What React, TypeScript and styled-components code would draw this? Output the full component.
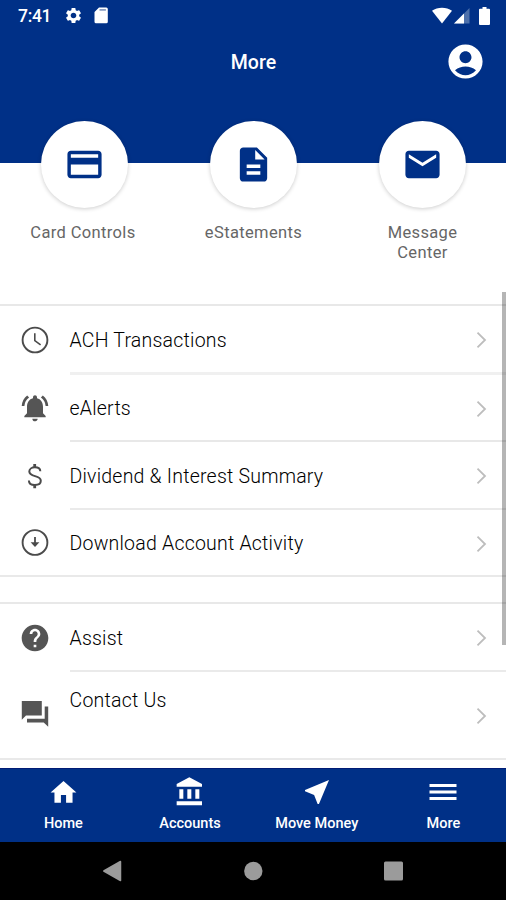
import React from "react";
import styled, { createGlobalStyle } from "styled-components";
import {
  MdAccountCircle,
  MdCreditCard,
  MdDescription,
  MdEmail,
  MdHelp,
  MdHome,
  MdNearMe,
  MdNotificationsActive,
  MdSettings,
} from "react-icons/md";

const navy = "#003087";

const GlobalStyle = createGlobalStyle`
  * { box-sizing: border-box; }
  body {
    margin: 0;
    background: #fff;
    font-family: Roboto, "Liberation Sans", sans-serif;
  }
  svg { display: block; flex: none; }
`;

const Screen = styled.div`
  position: relative;
  display: flex;
  flex-direction: column;
  width: 506px;
  height: 900px;
  overflow: hidden;
  background: #fff;
`;

const Header = styled.header`
  flex: none;
  height: 163px;
  background: ${navy};
  color: #fff;
`;

const StatusBar = styled.div`
  display: flex;
  align-items: center;
  height: 31px;
  padding: 0 16px 0 18px;
`;

const Clock = styled.span`
  width: 46px;
  font-size: 17.5px;
  font-weight: 500;
  letter-spacing: -0.3px;
`;

const StatusIcons = styled.div<{ $end?: boolean }>`
  display: flex;
  align-items: center;
  gap: ${(p) => (p.$end ? "2px" : "10.5px")};
  margin-left: ${(p) => (p.$end ? "auto" : "0")};
`;

const BatterySlot = styled.div`
  margin-left: 7px;
`;

const TitleBar = styled.div`
  display: grid;
  grid-template-columns: 1fr auto 1fr;
  align-items: center;
  height: 60px;
  padding: 0 20px;
`;

const Title = styled.h1`
  grid-column: 2;
  margin: 2px 0 0 1px;
  font-size: 19.5px;
  font-weight: 500;
  letter-spacing: 0.1px;
`;

const Profile = styled.div`
  justify-self: end;
`;

const QuickActions = styled.section`
  flex: none;
  display: grid;
  grid-template-columns: repeat(3, 169px);
  height: 183px;
  margin-top: -42px;
`;

const QuickAction = styled.div`
  display: flex;
  flex-direction: column;
  align-items: center;
`;

const Disc = styled.div`
  display: flex;
  align-items: center;
  justify-content: center;
  width: 87px;
  height: 87px;
  border-radius: 50%;
  background: #fff;
  color: ${navy};
  box-shadow: 0 1px 4px rgba(0, 0, 0, 0.2);
`;

const QuickLabel = styled.span<{ $shift?: number }>`
  max-width: 110px;
  margin-top: 15px;
  margin-left: ${(p) => p.$shift ?? 0}px;
  color: #666;
  font-size: 16.5px;
  line-height: 20px;
  letter-spacing: 0.36px;
  text-align: center;
`;

const Group = styled.ul<{ $gap?: boolean }>`
  flex: none;
  margin: ${(p) => (p.$gap ? "25px" : "0")} 0 0;
  padding: 0;
  list-style: none;
  border-top: 2px solid #e8e8e8;
  border-bottom: 2px solid #e9e9e9;
`;

const Row = styled.li<{ $height: number }>`
  display: flex;
  align-items: center;
  height: ${(p) => p.$height}px;
  padding-left: 21px;
  color: #555;
`;

const IconSlot = styled.div`
  display: flex;
  align-items: center;
  justify-content: center;
  width: 28px;
  height: 28px;
  margin-bottom: 1px;
`;

const RowBody = styled.div<{ $line?: string }>`
  display: flex;
  align-items: center;
  flex: 1;
  height: 100%;
  margin-left: 20.5px;
  padding: 2px 19px 0 0;
  border-bottom: ${(p) => p.$line ?? "none"};
`;

const RowLabel = styled.span<{ $raised?: boolean }>`
  flex: 1;
  margin-bottom: ${(p) => (p.$raised ? "31px" : "0")};
  color: #000;
  font-size: 19.5px;
  font-weight: 300;
  letter-spacing: 0.22px;
  white-space: nowrap;
`;

const ScrollThumb = styled.div`
  position: absolute;
  top: 292px;
  right: 0;
  width: 4px;
  height: 353px;
  background: rgba(0, 0, 0, 0.29);
`;

const TabBar = styled.nav`
  display: grid;
  grid-template-columns: repeat(4, 126.7px);
  flex: none;
  height: 74px;
  margin-top: auto;
  background: ${navy};
  border-top: 1px solid #001b75;
  color: #fff;
`;

const Tab = styled.div`
  display: flex;
  flex-direction: column;
  align-items: center;
  padding-top: 7px;
`;

const TabIcon = styled.div`
  display: flex;
  align-items: center;
  height: 32px;
`;

const TabLabel = styled.span`
  margin-top: 7px;
  font-size: 14.5px;
  font-weight: 500;
  line-height: 18px;
`;

const SystemBar = styled.div`
  display: flex;
  flex: none;
  align-items: center;
  justify-content: space-between;
  height: 58px;
  padding: 0 102px;
  background: #000;
`;

const SdCardIcon = () => (
  <svg width="14" height="17" viewBox="0 0 14 17">
    <path d="M5 .5h7.3A1.5 1.5 0 0 1 13.8 2v12.7a1.5 1.5 0 0 1-1.5 1.5H2A1.5 1.5 0 0 1 .5 14.700V5z" fill="#fff" />
    <path d="M5.500 2.900h6.400" stroke="#7d93bb" strokeWidth="1.600" />
  </svg>
);

const WifiIcon = () => (
  <svg width="20" height="17" viewBox="0 0 20 17">
    <path d="M0 3.800C5.600-.4 14.400-.4 20 3.800L10 16.500z" fill="#fff" />
  </svg>
);

const SignalIcon = () => (
  <svg width="16" height="17" viewBox="0 0 16 17">
    <path d="M0 16.500 15.500 1v15.500z" fill="#4d70ab" />
    <path d="M0 16.500 10 6.500v10z" fill="#fff" />
  </svg>
);

const BatteryIcon = () => (
  <svg width="11" height="18" viewBox="0 0 11 18">
    <path d="M3.500 0h4v1.800H10q1 0 1 1V17q0 1-1 1H1q-1 0-1-1V2.800q0-1 1-1h2.500z" fill="#fff" />
  </svg>
);

const ClockIcon = () => (
  <svg width="28" height="28" viewBox="0 0 28 28" fill="none" stroke="#4b4b4b">
    <circle cx="14" cy="14" r="12.400" strokeWidth="1.900" />
    <path d="M13.800 7.200v7.400l5.800 4.200" strokeWidth="1.600" />
  </svg>
);

const DollarIcon = () => (
  <svg width="28" height="28" viewBox="0 0 28 28" fill="none" stroke="#4b4b4b">
    <path d="M19.300 9.300C19.300 6.700 17 5.300 13.900 5.300S8.300 7 8.300 9.500c0 6 11.500 3.200 11.500 9.200 0 2.600-2.400 4.200-5.900 4.200s-6-1.600-6-4.500" strokeWidth="2" />
    <path d="M13.700 2v3.500M13.700 22.700v3.600" strokeWidth="2.800" />
  </svg>
);

const DownloadIcon = () => (
  <svg width="28" height="28" viewBox="0 0 28 28" fill="none" stroke="#4b4b4b">
    <circle cx="14" cy="14.500" r="12.400" strokeWidth="1.900" />
    <path d="M14 9v8" strokeWidth="1.800" />
    <path d="M9.600 14.200h8.800L14 19z" fill="#4b4b4b" stroke="none" />
  </svg>
);

const ChatIcon = () => (
  <svg width="28" height="28" viewBox="0 0 28 28" fill="#555">
    <path d="M.8 0h20v14.500H5L.8 18.700z" />
    <path d="M23.700 5.500h3.500v20.300L22.700 21.500H6V17.700h17.700z" />
  </svg>
);

const BankIcon = () => (
  <svg width="32" height="32" viewBox="0 0 24 24" fill="currentColor">
    <path d="M4 10v7h3v-7zM10 10v7h3v-7zM2 22h19v-3H2zM16 10v7h3v-7zM11.500 1 2 6v2h19V6z" />
  </svg>
);

const MenuIcon = () => (
  <svg width="32" height="32" viewBox="0 0 32 32" fill="currentColor">
    <path d="M2.500 8h27v3h-27zM2.500 14.500h27v3h-27zM2.500 21h27v3h-27z" />
  </svg>
);

const Chevron = () => (
  <svg width="11" height="18" viewBox="0 0 11 18" fill="none">
    <path d="M1.500 1.700 9 9l-7.500 7.300" stroke="#bdbdbd" strokeWidth="1.800" />
  </svg>
);

const BackIcon = () => (
  <svg width="20" height="22" viewBox="0 0 20 22">
    <path d="M18.500 1.500v19L1.800 11z" fill="#9b9b9b" stroke="#9b9b9b" strokeWidth="1.500" strokeLinejoin="round" />
  </svg>
);

const HomeDot = () => (
  <svg width="20" height="20" viewBox="0 0 20 20">
    <circle cx="10.300" cy="10" r="9.200" fill="#9b9b9b" />
  </svg>
);

const RecentsIcon = () => (
  <svg width="20" height="20" viewBox="0 0 20 20">
    <rect x="0" y=".5" width="19" height="19" rx="1.500" fill="#9b9b9b" />
  </svg>
);

interface ItemProps {
  icon: React.ReactNode;
  label: string;
  height?: number;
  line?: string;
  raised?: boolean;
}

const Item = ({ icon, label, height = 68, line, raised }: ItemProps) => (
  <Row $height={height}>
    <IconSlot>{icon}</IconSlot>
    <RowBody $line={line}>
      <RowLabel $raised={raised}>{label}</RowLabel>
      <Chevron />
    </RowBody>
  </Row>
);

const NavTab = ({ icon, label }: { icon: React.ReactNode; label: string }) => (
  <Tab>
    <TabIcon>{icon}</TabIcon>
    <TabLabel>{label}</TabLabel>
  </Tab>
);

export default function App() {
  return (
    <Screen>
      <GlobalStyle />
      <Header>
        <StatusBar>
          <Clock>7:41</Clock>
          <StatusIcons>
            <MdSettings size={19} />
            <SdCardIcon />
          </StatusIcons>
          <StatusIcons $end>
            <WifiIcon />
            <SignalIcon />
            <BatterySlot><BatteryIcon /></BatterySlot>
          </StatusIcons>
        </StatusBar>
        <TitleBar>
          <Title>More</Title>
          <Profile>
            <MdAccountCircle size={41} />
          </Profile>
        </TitleBar>
      </Header>
      <QuickActions>
        <QuickAction>
          <Disc><MdCreditCard size={41} /></Disc>
          <QuickLabel $shift={-3}>Card Controls</QuickLabel>
        </QuickAction>
        <QuickAction>
          <Disc><MdDescription size={41} /></Disc>
          <QuickLabel>eStatements</QuickLabel>
        </QuickAction>
        <QuickAction>
          <Disc><MdEmail size={41} /></Disc>
          <QuickLabel>Message Center</QuickLabel>
        </QuickAction>
      </QuickActions>
      <Group>
        <Item icon={<ClockIcon />} label="ACH Transactions" height={69} line="3px solid #f0f0f0" />
        <Item icon={<MdNotificationsActive size={32} />} label="eAlerts" height={67} line="2px solid #e8e8e8" />
        <Item icon={<DollarIcon />} label="Dividend & Interest Summary" line="2px solid #eaeaea" />
        <Item icon={<DownloadIcon />} label="Download Account Activity" height={65} />
      </Group>
      <Group $gap>
        <Item icon={<MdHelp size={32} />} label="Assist" line="2px solid #eaeaea" />
        <Item icon={<ChatIcon />} label="Contact Us" height={86} raised />
      </Group>
      <ScrollThumb />
      <TabBar>
        <NavTab icon={<MdHome size={31} />} label="Home" />
        <NavTab icon={<BankIcon />} label="Accounts" />
        <NavTab icon={<MdNearMe size={32} />} label="Move Money" />
        <NavTab icon={<MenuIcon />} label="More" />
      </TabBar>
      <SystemBar>
        <BackIcon />
        <HomeDot />
        <RecentsIcon />
      </SystemBar>
    </Screen>
  );
}
